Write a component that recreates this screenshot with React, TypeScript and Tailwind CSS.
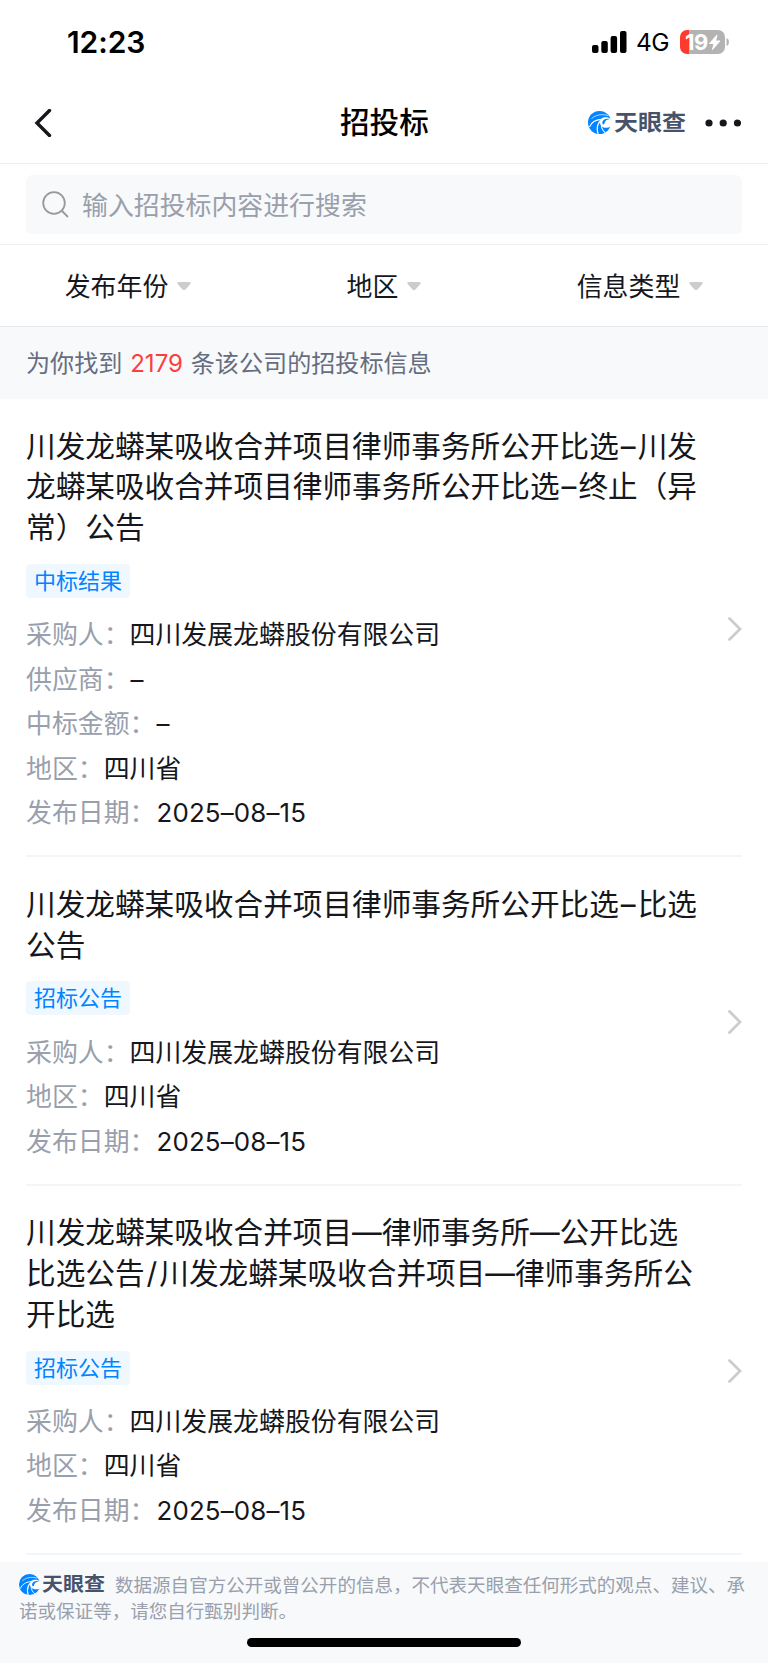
import { ReactNode } from 'react';

type Row = { label: string; value: string };

type Notice = {
  title: string[];
  tag: string;
  rows: Row[];
};

const notices: Notice[] = [
  {
    title: [
      '川发龙蟒某吸收合并项目律师事务所公开比选–川发',
      '龙蟒某吸收合并项目律师事务所公开比选–终止（异',
      '常）公告',
    ],
    tag: '中标结果',
    rows: [
      { label: '采购人', value: '四川发展龙蟒股份有限公司' },
      { label: '供应商', value: '–' },
      { label: '中标金额', value: '–' },
      { label: '地区', value: '四川省' },
      { label: '发布日期', value: '2025–08–15' },
    ],
  },
  {
    title: ['川发龙蟒某吸收合并项目律师事务所公开比选–比选', '公告'],
    tag: '招标公告',
    rows: [
      { label: '采购人', value: '四川发展龙蟒股份有限公司' },
      { label: '地区', value: '四川省' },
      { label: '发布日期', value: '2025–08–15' },
    ],
  },
  {
    title: [
      '川发龙蟒某吸收合并项目—律师事务所—公开比选',
      '比选公告/川发龙蟒某吸收合并项目—律师事务所公',
      '开比选',
    ],
    tag: '招标公告',
    rows: [
      { label: '采购人', value: '四川发展龙蟒股份有限公司' },
      { label: '地区', value: '四川省' },
      { label: '发布日期', value: '2025–08–15' },
    ],
  },
];

function LogoMark({ className }: { className: string }) {
  return (
    <svg viewBox="0 0 66 66" className={className} fill="none">
      <circle cx="33" cy="33" r="33" fill="#0084ff" />
      <path d="M10 22C22 11 38 8 58 13" stroke="#fff" strokeWidth="2" />
      <path
        d="M67 24C60 17 46 16 38 22C33 27 33 36 38 42C45 50 57 50 67 44Z"
        fill="#fff"
      />
      <path d="M41 33C42 24 51 20 63 23C55 24 48 28 47 36C45 41 41 39 41 33Z" fill="#0084ff" />
      <path d="M38 24C20 25 9 34 4 46" stroke="#fff" strokeWidth="3" />
      <path d="M36 28C26 38 24 50 29 66" stroke="#fff" strokeWidth="3.5" />
      <path d="M38 38C38 48 42 56 50 63" stroke="#fff" strokeWidth="3" />
    </svg>
  );
}

function StatusBar() {
  return (
    <div className="flex h-[84px] items-center justify-between pl-[67px] pr-[39px]">
      <span className="font-[Inter] text-[30px] font-semibold leading-none tracking-[-0.1px]">
        12:23
      </span>
      <div className="flex items-center">
        <svg viewBox="0 0 35 22" className="h-[22px] w-[35px]">
          <rect x="0" y="14" width="6.5" height="8" rx="2" />
          <rect x="9.3" y="10" width="6.5" height="12" rx="2" />
          <rect x="18.6" y="5" width="6.5" height="17" rx="2" />
          <rect x="28" y="0" width="6.5" height="22" rx="2" />
        </svg>
        <span className="ml-[9px] w-[34px] pt-px font-[Inter] text-[24.5px] leading-none tracking-[-0.5px]">
          4G
        </span>
        <svg viewBox="0 0 49 24" className="ml-[10px] h-6 w-[49px] overflow-visible">
          <path d="M9 0H7a7 7 0 0 0-7 7v10a7 7 0 0 0 7 7h2Z" fill="#ff3b30" />
          <path d="M9 0h29a7 7 0 0 1 7 7v10a7 7 0 0 1-7 7H9Z" fill="#b3b3b3" />
          <path d="M46.5 8q2.5 1 2.5 4t-2.5 4Z" fill="#b3b3b3" />
          <text
            x="5"
            y="20"
            fill="#fff"
            className="font-[Inter] text-[22px] font-bold tracking-[-0.5px]"
          >
            19
          </text>
          <path
            d="M37 5L29.5 13.5H34L32.5 19.5L40 11H35.5Z"
            fill="#fff"
            stroke="#fff"
            strokeLinejoin="round"
          />
        </svg>
      </div>
    </div>
  );
}

function Header() {
  return (
    <header className="flex h-20 items-center border-b border-[#ececf0] pb-[2px] pl-[34px] pr-[26px]">
      <div className="w-[306px]">
        <svg viewBox="0 0 18 28" className="h-7 w-[18px]" fill="none">
          <path
            d="M15.5 1.5L3 14L15.5 26.5"
            stroke="#15171c"
            strokeWidth="3.4"
            strokeLinecap="round"
          />
        </svg>
      </div>
      <h1 className="text-[29.6px] font-medium leading-none">招投标</h1>
      <div className="flex flex-1 items-center justify-end">
        <LogoMark className="h-[23px] w-[23px]" />
        <span className="ml-[3px] inline-block origin-center scale-y-90 text-[24px] font-bold leading-none text-[#47536b]">
          天眼查
        </span>
        <svg viewBox="0 0 36 8" className="ml-[19px] mr-px h-2 w-9" fill="#15171c">
          <circle cx="4" cy="4" r="3.6" />
          <circle cx="18.2" cy="4" r="3.6" />
          <circle cx="32.5" cy="4" r="3.6" />
        </svg>
      </div>
    </header>
  );
}

function SearchBar() {
  return (
    <div className="h-[81px] border-b border-[#ececf2] px-[26px] pt-[11px]">
      <div className="flex h-[59px] items-center rounded-[6px] bg-[#f7f9fb] pl-4">
        <svg
          viewBox="0 0 27 27"
          className="h-[27px] w-[27px]"
          fill="none"
          stroke="#999"
          strokeWidth="1.8"
        >
          <circle cx="12" cy="12" r="10.8" />
          <path d="M19.5 19.5L26 26" />
        </svg>
        <span className="ml-[13px] pt-[2px] text-[25.9px] leading-none text-[#999fac]">
          输入招投标内容进行搜索
        </span>
      </div>
    </div>
  );
}

function Filter({ children }: { children: ReactNode }) {
  return (
    <button className="flex flex-1 items-center justify-center gap-[9px] pt-[2px] text-[25.9px] leading-none">
      {children}
      <svg viewBox="0 0 14 9" className="h-[9px] w-[14px]">
        <path
          d="M1.5 0h11q2 .5 .8 2L8.5 7.5q-1.5 1.5-3 0L.7 2Q-.5 .5 1.5 0Z"
          fill="#ccc"
        />
      </svg>
    </button>
  );
}

// Dashes and slashes get a bit of air so they don't touch the neighbouring glyphs
function TitleLine({ text }: { text: string }) {
  return (
    <span className="block whitespace-nowrap">
      {text.split(/([–/])/).map((part, i) =>
        i % 2 ? (
          <span key={i} className="mx-[2px]">
            {part}
          </span>
        ) : (
          part
        ),
      )}
    </span>
  );
}

function NoticeItem({ notice }: { notice: Notice }) {
  return (
    <li className="mx-[26px] flex items-center justify-between border-b-2 border-[#f4f5f8] pb-[19.7px] pt-[26.6px]">
      <div>
        <h2 className="text-[29.65px] leading-[40.8px]">
          {notice.title.map((line) => (
            <TitleLine key={line} text={line} />
          ))}
        </h2>
        <span className="mt-4 flex h-[34px] w-[104px] items-center justify-center rounded-[4px] bg-[#f0f8ff] text-[22px] leading-none text-[#0084ff]">
          {notice.tag}
        </span>
        <dl className="mt-[15.1px] text-[25.9px] leading-[44.5px]">
          {notice.rows.map((row) => (
            <div key={row.label} className="flex whitespace-nowrap">
              <dt className="text-[#999fac]">{row.label}：</dt>
              <dd className={/^[\d–]/.test(row.value) ? 'pl-px tracking-[0.15px]' : ''}>
                {row.value}
              </dd>
            </div>
          ))}
        </dl>
      </div>
      <svg viewBox="0 0 14 24" className="mb-[4px] h-6 w-[14px]" fill="none">
        <path
          d="M1.5 1.5L12 12L1.5 22.5"
          stroke="#ccc"
          strokeWidth="2.8"
          strokeLinecap="round"
        />
      </svg>
    </li>
  );
}

function Footer() {
  return (
    <footer className="mt-[6.5px] flex h-[101px] flex-col bg-[#f7f9fb] pl-[19px] pt-[10px] text-[18.55px] leading-[26px] text-[#999fac]">
      <div className="flex items-center whitespace-nowrap">
        <LogoMark className="h-[21px] w-[21px]" />
        <span className="ml-[2px] inline-block scale-y-90 text-[21px] font-bold text-[#47536b]">
          天眼查
        </span>
        <span className="ml-[10px]">
          数据源自官方公开或曾公开的信息，不代表天眼查任何形式的观点、建议、承
        </span>
      </div>
      <p>诺或保证等，请您自行甄别判断。</p>
      <div className="ml-[228px] mt-[14px] h-[9px] w-[274px] rounded-full bg-black" />
    </footer>
  );
}

export default function App() {
  return (
    <div
      lang="zh-CN"
      className="h-[1663px] w-[768px] overflow-hidden bg-white font-[Inter,'Noto_Sans_CJK_SC',sans-serif] text-[#15171c]"
    >
      <div className="text-black">
        <StatusBar />
        <Header />
      </div>
      <SearchBar />
      <div className="flex h-[82px] border-b border-[#e8e9ef]">
        <Filter>发布年份</Filter>
        <Filter>地区</Filter>
        <Filter>信息类型</Filter>
      </div>
      <p className="h-[72px] bg-[#f7f9fb] pl-[26px] text-[24.1px] leading-[73px] text-[#666d7f]">
        为你找到 <span className="mx-px text-[#ff3d3d]">2179</span> 条该公司的招投标信息
      </p>
      <ul>
        {notices.map((notice, i) => (
          <NoticeItem key={i} notice={notice} />
        ))}
      </ul>
      <Footer />
    </div>
  );
}
